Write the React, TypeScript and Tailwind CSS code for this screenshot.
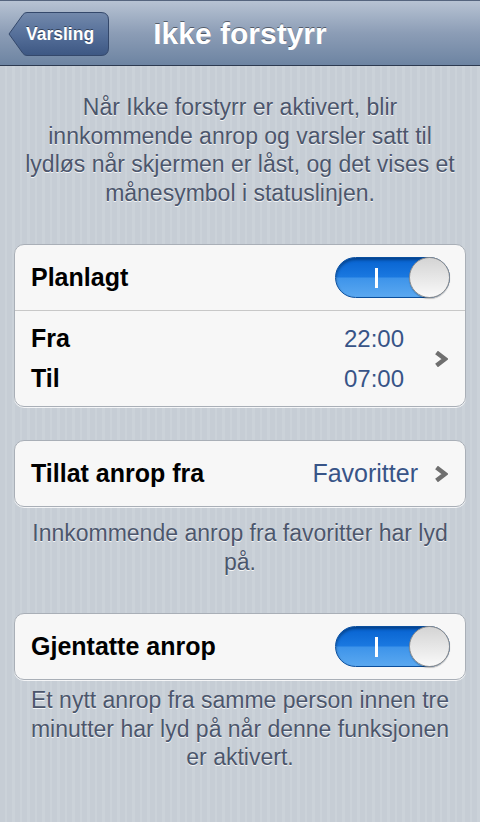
import React from 'react';

const font = { fontFamily: '"Liberation Sans", Arial, Helvetica, sans-serif' };

function Chevron() {
  return (
    <svg width="14" height="16" viewBox="0 0 14 16" className="shrink-0">
      <path d="M2.5 1.5 L11 8 L2.5 14.5" fill="none" stroke="#6f6f6f" strokeWidth="4.5" strokeLinejoin="miter" />
    </svg>
  );
}

function Toggle() {
  return (
    <div className="relative h-[41px] w-[115px] shrink-0 rounded-full border border-[#0a4f9e] bg-[linear-gradient(to_bottom,#0662d0_0%,#1a78e0_48%,#3e94ea_52%,#5aa8f0_100%)] shadow-[inset_0_2px_3px_rgba(0,0,0,0.35)]">
      <div className="absolute left-[39px] top-[10px] h-[20px] w-[3px] bg-white" />
      <div className="absolute right-[-1px] top-[-1px] h-[41px] w-[41px] rounded-full border border-[#8e8e8e] bg-[linear-gradient(to_bottom,#d4d4d4,#f9f9f9)] shadow-[0_1px_1px_rgba(0,0,0,0.25)]" />
    </div>
  );
}

function Group({ children }: { children: React.ReactNode }) {
  return (
    <div className="mx-[14px] overflow-hidden rounded-[10px] border border-[#a9afb7] bg-[#f7f7f7] shadow-[0_1px_0_rgba(255,255,255,0.8)]">
      {children}
    </div>
  );
}

function Footer({ lines, className }: { lines: string[]; className?: string }) {
  return (
    <div className={`px-[10px] text-center text-[23px] leading-[28.5px] text-[#4c566c] [text-shadow:0_1px_0_rgba(255,255,255,0.8)] ${className ?? ''}`}>
      {lines.map((l) => (
        <div key={l} className="whitespace-nowrap">{l}</div>
      ))}
    </div>
  );
}

export default function App() {
  return (
    <div
      style={font}
      className="min-h-[822px] w-[480px] overflow-hidden bg-[repeating-linear-gradient(90deg,#c6cdd5_0px,#c6cdd5_5px,#cbd2d9_5px,#cbd2d9_7.5px)] pb-8"
    >
      {/* nav */}
      <div className="relative flex h-[66px] items-center justify-center border-b border-t border-b-[#2d3a50] border-t-[#55657e] bg-[linear-gradient(to_bottom,#b7c3d3,#8c9db6_50%,#6d84a2)]">
        <div className="absolute left-[8px] top-[11px] flex h-[44px] w-[101px] items-center pl-[18px]">
          <svg className="absolute inset-0" width="101" height="44" viewBox="0 0 101 44">
            <defs>
              <linearGradient id="bb" x1="0" y1="0" x2="0" y2="1">
                <stop offset="0" stopColor="#7389ab" />
                <stop offset="0.5" stopColor="#56709a" />
                <stop offset="1" stopColor="#3d5783" />
              </linearGradient>
            </defs>
            <path
              d="M1 22 L15 2.5 Q16.5 0.5 19 0.5 L93 0.5 Q100.5 0.5 100.5 8 L100.5 36 Q100.5 43.5 93 43.5 L19 43.5 Q16.5 43.5 15 41.5 Z"
              fill="url(#bb)"
              stroke="#34486b"
              strokeWidth="1"
            />
          </svg>
          <span className="relative text-[17.5px] font-bold text-white [text-shadow:0_-1px_0_rgba(0,0,0,0.45)]">Varsling</span>
        </div>
        <h1 className="text-[30px] font-bold text-white [text-shadow:0_-1px_0_rgba(0,0,0,0.45)]">Ikke forstyrr</h1>
      </div>

      <Footer
        className="pt-[27px]"
        lines={[
          'Når Ikke forstyrr er aktivert, blir',
          'innkommende anrop og varsler satt til',
          'lydløs når skjermen er låst, og det vises et',
          'månesymbol i statuslinjen.',
        ]}
      />

      <div className="mt-[37px]">
        <Group>
          <div className="flex h-[65px] items-center justify-between pl-[16px] pr-[15px]">
            <span className="text-[25px] font-bold text-black">Planlagt</span>
            <Toggle />
          </div>
          <div className="border-t border-[#c8c8c8]" />
          <div className="flex h-[95px] items-center pl-[16px] pr-[17px]">
            <div className="flex flex-1 flex-col">
              <div className="flex h-[40px] items-center justify-between">
                <span className="text-[25px] font-bold text-black">Fra</span>
                <span className="text-[24px] text-[#385487]">22:00</span>
              </div>
              <div className="flex h-[40px] items-center justify-between">
                <span className="text-[25px] font-bold text-black">Til</span>
                <span className="text-[24px] text-[#385487]">07:00</span>
              </div>
            </div>
            <div className="ml-[30px]">
              <Chevron />
            </div>
          </div>
        </Group>
      </div>

      <div className="mt-[33px]">
        <Group>
          <div className="flex h-[65px] items-center pl-[16px] pr-[17px]">
            <span className="flex-1 text-[25px] font-bold text-black">Tillat anrop fra</span>
            <span className="mr-[16px] text-[25px] text-[#385487]">Favoritter</span>
            <Chevron />
          </div>
        </Group>
      </div>

      <Footer className="pt-[12px]" lines={['Innkommende anrop fra favoritter har lyd', 'på.']} />

      <div className="mt-[37px]">
        <Group>
          <div className="flex h-[65px] items-center justify-between pl-[16px] pr-[15px]">
            <span className="text-[25px] font-bold text-black">Gjentatte anrop</span>
            <Toggle />
          </div>
        </Group>
      </div>

      <Footer
        className="pt-[6px]"
        lines={[
          'Et nytt anrop fra samme person innen tre',
          'minutter har lyd på når denne funksjonen',
          'er aktivert.',
        ]}
      />
    </div>
  );
}
